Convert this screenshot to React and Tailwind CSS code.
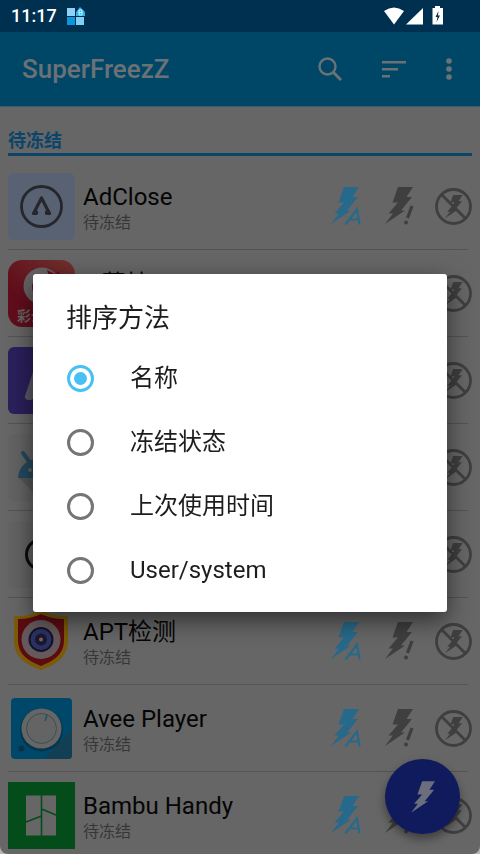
import { useState } from 'react'

const BOLT = 'M13 0H28L21.5 10H27L16 23.5H20L0 37L8 26.500H3.500L13 15.500H7.500Z'

const APPS = [
  { id: 1, name: 'AdClose', status: '待冻结', Icon: AdCloseIcon },
  { id: 2, name: 'e 荔枝', Icon: LycheeIcon },
  { id: 3, Icon: PurpleIcon },
  { id: 4, Icon: AndroidIcon },
  { id: 5, Icon: RingIcon },
  { id: 6, name: 'APT检测', status: '待冻结', Icon: ShieldIcon },
  { id: 7, name: 'Avee Player', status: '待冻结', Icon: KnobIcon },
  { id: 8, name: 'Bambu Handy', status: '待冻结', Icon: BambuIcon },
]

const SORT_OPTIONS = ['名称', '冻结状态', '上次使用时间', 'User/system']

function AdCloseIcon() {
  return (
    <svg viewBox="0 0 67 67" className="size-[67px]">
      <rect width="67" height="67" rx="6" fill="#596273" />
      <g fill="none" stroke="#25272b" strokeLinecap="round" strokeLinejoin="round">
        <circle cx="33.5" cy="33.5" r="20" strokeWidth="2.8" />
        <path d="M28 40.5H25.5L33.5 25L41.5 40.5H39" strokeWidth="3.2" />
      </g>
      <circle cx="27.500" cy="39.500" r="2.600" fill="#25272b" />
      <circle cx="39.500" cy="39.500" r="2.600" fill="#25272b" />
    </svg>
  )
}

function LycheeIcon() {
  return (
    <svg viewBox="0 0 67 67" className="size-[67px]">
      <defs>
        <linearGradient id="lychee" x1="0" y1="1" x2="1" y2="0">
          <stop offset="0.3" stopColor="#620d1b" />
          <stop offset="1" stopColor="#71332f" />
        </linearGradient>
      </defs>
      <rect width="67" height="67" rx="14" fill="url(#lychee)" />
      <circle cx="34" cy="26" r="18.5" fill="#686365" />
      <circle cx="36" cy="27" r="12" fill="#620d1b" />
      <path d="M39 10L47 14L51 11L52 20L42 20Z" fill="#620d1b" />
      <text x="9" y="61" fontSize="14" fontWeight="700" fill="#686365" fontFamily="Noto Sans CJK SC, sans-serif">彩云</text>
    </svg>
  )
}

function PurpleIcon() {
  return (
    <svg viewBox="0 0 67 67" className="size-[67px]">
      <rect width="67" height="67" rx="6" fill="#2b205c" />
      <path d="M27 19C28 16 39 16 40 19L50 49C50 53 43 53 42 51L37 42H30L26 51C24 54 16 54 17 49Z" fill="#5b5966" />
    </svg>
  )
}

function AndroidIcon() {
  return (
    <svg viewBox="0 0 67 67" className="size-[67px]">
      <rect width="67" height="67" rx="6" fill="#636363" />
      <path d="M11 44L30 63H67V44Z" fill="#565656" />
      <path d="M10 44A23 20 0 0 1 56 44Z" fill="#24495f" />
      <path d="M15 19L23 30M51 19L43 30" stroke="#24495f" strokeWidth="4" strokeLinecap="round" />
      <circle cx="22" cy="36" r="2" fill="#636363" />
      <circle cx="44" cy="36" r="2" fill="#636363" />
    </svg>
  )
}

function RingIcon() {
  return (
    <svg viewBox="0 0 67 67" className="size-[67px]">
      <rect width="67" height="67" rx="6" fill="#636363" />
      <circle cx="33.5" cy="33.5" r="15" fill="none" stroke="#0b0b0b" strokeWidth="3" />
    </svg>
  )
}

function ShieldIcon() {
  return (
    <svg viewBox="0 0 67 67" className="size-[67px]">
      <path d="M6 8Q20 9 33 2Q46 9 60 8V32C60 50 47 57 33 62C19 57 6 50 6 32Z" fill="#7b5a08" />
      <path d="M10 11Q23 11 33 6Q43 11 56 11V32C56 47 45 53 33 58C21 53 10 47 10 32Z" fill="#5c0b10" />
      <circle cx="33" cy="31.500" r="19.500" fill="#66595b" />
      <circle cx="33" cy="31.500" r="12.500" fill="#10132a" />
      <circle cx="33" cy="31.500" r="10.500" fill="#2d315e" />
      <circle cx="33" cy="31.500" r="6" fill="#15183a" />
      <circle cx="33" cy="31.500" r="2" fill="#8a6030" />
    </svg>
  )
}

function KnobIcon() {
  return (
    <svg viewBox="0 0 67 67" className="size-[67px]">
      <rect x="3" y="3" width="61" height="61" rx="4" fill="#00486a" />
      <path d="M64 34V60Q64 64 60 64H36Z" fill="#123f54" />
      <circle cx="33.500" cy="35" r="21.500" fill="#06364d" />
      <circle cx="33.500" cy="33.500" r="20" fill="#666" />
      <circle cx="33.500" cy="33.500" r="15" fill="#646464" stroke="#365059" strokeWidth="1" />
      <path d="M39 20L37 26" stroke="#1d5468" strokeWidth="1.500" />
      <circle cx="13.500" cy="53.500" r="3" fill="#0a3146" />
    </svg>
  )
}

function BambuIcon() {
  return (
    <svg viewBox="0 0 67 67" className="size-[67px]">
      <rect width="67" height="67" fill="#044d1b" />
      <rect x="18" y="13.500" width="30" height="40" fill="#666" />
      <path d="M33.500 13V54M18 40L33.500 34M33.500 27L48 33" stroke="#044d1b" strokeWidth="1.600" />
    </svg>
  )
}

function BoltAuto() {
  return (
    <svg viewBox="0 0 30 38" className="h-[38px] w-[30px]">
      <path d={BOLT} fill="#27698a" />
      <path d="M13 38L26 20" fill="none" stroke="#666" strokeWidth="3" />
      <path d="M14.500 37.500L26 22.500L28.500 37.500M18.500 32.500H28" fill="none" stroke="#27698a" strokeWidth="2.200" />
    </svg>
  )
}

function BoltAlways() {
  return (
    <svg viewBox="0 0 30 38" className="h-[38px] w-[30px]">
      <path d={BOLT} fill="#3f3f3f" />
      <path d="M27 19L22.500 31" stroke="#3f3f3f" strokeWidth="3.200" />
      <circle cx="21" cy="35.500" r="2" fill="#3f3f3f" />
    </svg>
  )
}

function BoltOff() {
  return (
    <svg viewBox="0 0 37 37" className="size-[37px]">
      <path d={BOLT} transform="translate(10 7) scale(.63)" fill="#3f3f3f" />
      <circle cx="18.500" cy="18.500" r="17" fill="none" stroke="#3f3f3f" strokeWidth="2.800" />
      <path d="M6 6L31 31" stroke="#3f3f3f" strokeWidth="2.800" />
      <circle cx="18" cy="15" r="1" fill="#666" />
    </svg>
  )
}

function AppRow({ name, status, Icon }) {
  return (
    <li className="flex h-[87px] shrink-0 flex-col">
      <div className="flex flex-1 items-center gap-2">
        <Icon />
        <div className="h-[58px] min-w-0 flex-1 pt-1.5">
          {name && <p className="truncate text-2xl leading-7 text-[#050505]">{name}</p>}
          {status && <p className="text-base leading-6 text-[#363636]">{status}</p>}
        </div>
        <div className="flex items-center">
          <button aria-label="自动冻结" className="mr-6"><BoltAuto /></button>
          <button aria-label="始终冻结" className="mr-5"><BoltAlways /></button>
          <button aria-label="从不冻结"><BoltOff /></button>
        </div>
      </div>
      <hr className="mr-1 border-t border-[#535353]" />
    </li>
  )
}

function StatusBar() {
  return (
    <div className="flex h-8 shrink-0 items-center bg-[#00304f] pl-[11px] pr-9 text-white">
      <span className="text-lg font-medium">11:17</span>
      <svg viewBox="0 0 18 18" className="ml-2.5 size-[18px]">
        <rect width="8" height="8" y="1" fill="#8ed3f5" />
        <path d="M9 5L13 0L18 5V9H9Z" fill="#27b5e8" />
        <rect y="10" width="8" height="8" fill="#0c96dc" />
        <rect x="9" y="10" width="8" height="8" fill="#7fd0f7" />
        <path d="M12 3H15V8H12ZM12 5.500H15" fill="none" stroke="#d8f3ff" />
      </svg>
      <svg viewBox="0 0 60 20" className="ml-auto h-5 w-[60px]" fill="#fff">
        <path d="M0 5Q10 -2 20 5L10 18.500Z" />
        <path d="M39 2V18.500H22Z" />
        <path d="M51 0H56V2H59V18.500H48.500V2H51Z" />
        <path d="M54.500 5L51.500 11H53.500L52.500 16L56 9.500H54Z" fill="#00304f" />
      </svg>
    </div>
  )
}

function Toolbar() {
  return (
    <header className="flex h-[75px] shrink-0 items-center border-b border-[#3d5c6c] bg-[#004767] px-[22px] text-[#6b7276]">
      <h1 className="flex-1 text-[26px] font-medium">SuperFreezZ</h1>
      <button aria-label="搜索" className="mr-10">
        <svg viewBox="0 0 24 24" className="size-6" fill="none" stroke="currentColor" strokeWidth="2.400">
          <circle cx="9.500" cy="9.500" r="8" />
          <path d="M15 15L23 23" strokeWidth="3" />
        </svg>
      </button>
      <button aria-label="排序" className="mr-10">
        <svg viewBox="0 0 24 18" className="h-[18px] w-6" fill="currentColor">
          <path d="M0 1H24V3.600H0ZM0 8H16V10.600H0ZM0 15H8V17.600H0Z" />
        </svg>
      </button>
      <button aria-label="更多选项" className="w-3">
        <svg viewBox="0 0 6 22" className="h-[22px] w-1.5" fill="currentColor">
          <circle cx="3" cy="3" r="2.800" />
          <circle cx="3" cy="11" r="2.800" />
          <circle cx="3" cy="19" r="2.800" />
        </svg>
      </button>
    </header>
  )
}

function SortDialog({ value, onChange }) {
  return (
    <div className="fixed inset-0 flex items-center justify-center px-[33px] pt-8">
      <div
        role="dialog"
        aria-labelledby="sort-title"
        className="w-full rounded-[3px] bg-white px-[33px] pt-6 pb-2.5 shadow-[0_8px_24px_rgba(0,0,0,0.55)]"
      >
        <h2 id="sort-title" className="mb-2 text-[26px] leading-10 text-[#1d1d1d]">排序方法</h2>
        {SORT_OPTIONS.map((option) => (
          <label key={option} className="flex h-16 items-center gap-9 pl-px text-2xl text-[#1d1d1d]">
            <input
              type="radio"
              name="sort"
              checked={value === option}
              onChange={() => onChange(option)}
              className="size-[27px] appearance-none rounded-full border-[3px] border-[#757575] bg-clip-content p-1 checked:border-[#48c0f4] checked:bg-[#48c0f4]"
            />
            {option}
          </label>
        ))}
      </div>
    </div>
  )
}

export default function App() {
  const [sort, setSort] = useState('名称')

  return (
    <div className="bg-[#b5b5b5] font-[Roboto,'Noto_Sans_CJK_SC',sans-serif]">
      <div className="flex h-screen flex-col overflow-hidden rounded-b-lg bg-[#666]">
        <StatusBar />
        <Toolbar />
        <main className="min-h-0 flex-1 overflow-hidden px-2 pt-[22px]">
          <h2 className="mb-[7px] border-b-[3px] border-[#0b4569] text-lg font-bold leading-6 text-[#0b4569]">待冻结</h2>
          <ul className="flex flex-col">
            {APPS.map((app) => (
              <AppRow key={app.id} {...app} />
            ))}
          </ul>
        </main>
      </div>

      <button
        aria-label="冻结"
        className="fixed right-5 bottom-5 flex size-[75px] items-center justify-center rounded-full bg-[#0f1b5c] shadow-[0_5px_10px_rgba(0,0,0,0.4)]"
      >
        <svg viewBox="0 0 28 37" className="h-8 w-6">
          <path d={BOLT} fill="#6b6e7d" />
        </svg>
      </button>

      <SortDialog value={sort} onChange={setSort} />
    </div>
  )
}
